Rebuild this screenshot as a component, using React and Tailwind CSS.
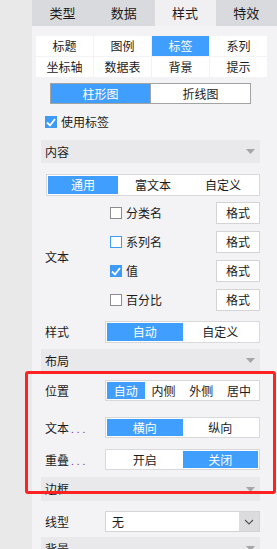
import React from 'react';

const BLUE = 'bg-[#409eff]';

const Caret = () => (
  <svg width="9" height="5" viewBox="0 0 9 5" className="mr-[5px]">
    <path d="M0 0 L9 0 L4.5 5 Z" fill="#a6a6a8" />
  </svg>
);

const Section = ({ title, className = '', h = 'h-[23px]' }) => (
  <div className={`flex items-center justify-between bg-[#e9e9eb] pl-[4px] ${h} ${className}`}>
    <span>{title}</span>
    <Caret />
  </div>
);

const Segmented = ({ items, active, className = '' }) => (
  <div className={`flex border border-[#d9d9dc] bg-white p-px ${className}`}>
    {items.map((it, i) => (
      <div
        key={it}
        className={`flex flex-1 items-center justify-center ${i === active ? `${BLUE} text-white` : ''}`}
      >
        {it}
      </div>
    ))}
  </div>
);

const Check = ({ checked, focus }) => {
  if (checked) {
    return (
      <span className="flex h-[12px] w-[12px] items-center justify-center bg-[#3d9af5]">
        <svg width="10" height="9" viewBox="0 0 10 9">
          <path d="M1 4.5 L4 7.5 L9 1" stroke="white" strokeWidth="1.8" fill="none" />
        </svg>
      </span>
    );
  }
  return (
    <span
      className={`block h-[12px] w-[12px] border bg-white ${focus ? 'border-[#3d9af5]' : 'border-[#8c8c8c]'}`}
    />
  );
};

const Row = ({ label, children, className = '' }) => (
  <div className={`flex items-center ${className}`}>
    <div className="w-[64px] pl-[4px] whitespace-nowrap">{label}</div>
    <div className="flex-1">{children}</div>
  </div>
);

const Dots = () => <span className="ml-[2px] tracking-[3px] text-[10px] text-[#7a2a8a]">...</span>;

export default function App() {
  const tabs = ['类型', '数据', '样式', '特效'];
  const sub = ['标题', '图例', '标签', '系列', '坐标轴', '数据表', '背景', '提示'];
  const textRows = [
    { name: '分类名', checked: false },
    { name: '系列名', checked: false, focus: true },
    { name: '值', checked: true },
    { name: '百分比', checked: false },
  ];

  return (
    <div
      className="relative flex h-[549px] w-[277px] overflow-hidden text-[12px] text-[#1b1b1b]"
      style={{ fontFamily: '"Noto Sans CJK SC", "Noto Sans", sans-serif' }}
    >
      <div className="w-[32px] shrink-0 bg-[#e9e9ea]" />
      <div className="flex-1 bg-[#f3f3f5]">
        <div className="grid h-[26px] grid-cols-4 bg-[#d9dadd] text-[13px]">
          {tabs.map((t, i) => (
            <div key={t} className={`flex items-center justify-center ${i === 2 ? 'bg-[#f0f0f2]' : ''}`}>
              {t}
            </div>
          ))}
        </div>

        <div className="pl-[9px] pr-[17px]">
          <div className="ml-[-5px] mr-[-7px] mt-[10px] grid grid-cols-4 gap-px">
            {sub.map((s, i) => (
              <div
                key={s}
                className={`flex h-[20px] items-center justify-center ${i === 2 ? `${BLUE} text-white` : 'bg-white'}`}
              >
                {s}
              </div>
            ))}
          </div>

          <div className="ml-[9px] mt-[6px] flex h-[21px] w-[201px] border border-[#a3a3a3] bg-white">
            <div className={`flex flex-1 items-center justify-center text-white ${BLUE}`}>柱形图</div>
            <div className="flex flex-1 items-center justify-center border-l border-[#a3a3a3]">折线图</div>
          </div>

          <div className="ml-[4px] mt-[10px] flex h-[16px] items-center gap-[4px]">
            <Check checked />
            <span>使用标签</span>
          </div>

          <Section title="内容" className="mt-[10px]" />

          <Segmented items={['通用', '富文本', '自定义']} active={0} className="ml-[5px] mt-[11px] h-[22px]" />

          <div className="mt-[6px] flex items-center">
            <div className="w-[64px] pl-[4px]">文本</div>
            <div className="flex flex-1 flex-col gap-[7px]">
              {textRows.map((r) => (
                <div key={r.name} className="flex h-[22px] items-center justify-between pl-[5px]">
                  <div className="flex items-center gap-[4px]">
                    <Check checked={r.checked} focus={r.focus} />
                    <span>{r.name}</span>
                  </div>
                  <div className="flex h-[22px] w-[44px] items-center justify-center border border-[#d4d4d6] bg-white">
                    格式
                  </div>
                </div>
              ))}
            </div>
          </div>

          <Row label="样式" className="mt-[10px]">
            <Segmented items={['自动', '自定义']} active={0} className="h-[22px]" />
          </Row>

          <Section title="布局" className="mt-[6px]" />

          <Row label="位置" className="mt-[8px]">
            <Segmented items={['自动', '内侧', '外侧', '居中']} active={0} className="h-[21px]" />
          </Row>

          <Row
            label={
              <>
                文本
                <Dots />
              </>
            }
            className="mt-[16px]"
          >
            <Segmented items={['横向', '纵向']} active={0} className="h-[21px]" />
          </Row>

          <Row
            label={
              <>
                重叠
                <Dots />
              </>
            }
            className="mt-[11px]"
          >
            <Segmented items={['开启', '关闭']} active={1} className="h-[21px]" />
          </Row>

          <Section title="边框" className="mt-[7px]" h="h-[24px]" />

          <Row label="线型" className="mt-[10px]">
            <div className="flex h-[21px] border border-[#d4d4d6] bg-white">
              <div className="flex flex-1 items-center pl-[6px]">无</div>
              <div className="flex w-[20px] items-center justify-center bg-[#dcdcde]">
                <svg width="10" height="6" viewBox="0 0 10 6">
                  <path d="M1 1 L5 5 L9 1" stroke="#555" strokeWidth="1.2" fill="none" />
                </svg>
              </div>
            </div>
          </Row>

          <Section title="背景" className="mt-[5px]" />
        </div>
      </div>

      <div className="absolute left-[25px] top-[371px] h-[123px] w-[251px] rounded-[3px] border-[3px] border-[#ff2222]" />
    </div>
  );
}
